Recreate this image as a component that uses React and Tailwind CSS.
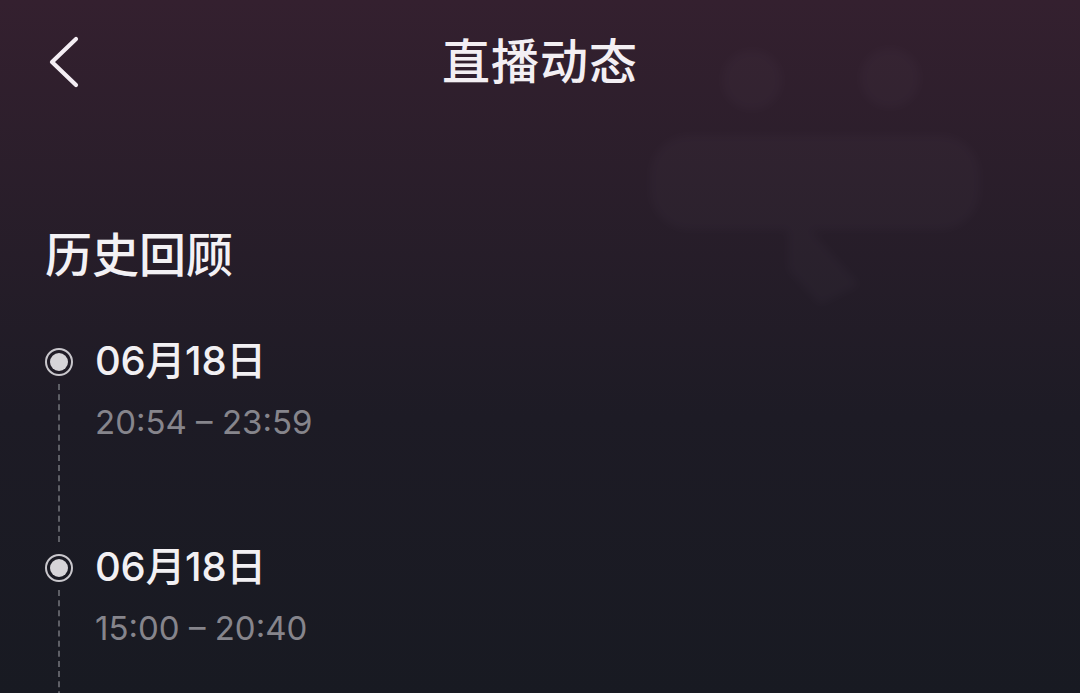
import React from "react";

const sessions = [
  { date: "06月18日", time: "20:54 – 23:59" },
  { date: "06月18日", time: "15:00 – 20:40" },
];

const font = { fontFamily: 'Inter, "Noto Sans CJK SC", sans-serif' };

const Watermark = () => (
  <svg
    className="absolute left-[520px] top-[20px] opacity-[0.022] blur-[4px]"
    width="480"
    height="360"
    viewBox="0 0 480 360"
    fill="#c9b8d8"
  >
    <circle cx="232" cy="60" r="30" />
    <circle cx="370" cy="58" r="30" />
    <rect x="130" y="115" width="330" height="95" rx="40" />
    <path d="M268 185 L340 265 L300 285 L268 250 Z" />
  </svg>
);

const BackIcon = () => (
  <svg
    className="absolute left-[46px] top-[36px]"
    width="36"
    height="52"
    viewBox="0 0 36 52"
    fill="none"
    stroke="#f4eef4"
    strokeWidth="4.2"
    strokeLinecap="round"
    strokeLinejoin="round"
  >
    <polyline points="30,3 6,26 30,49" />
  </svg>
);

const TimelineItem = ({ date, time }) => (
  <div className="flex h-[206px]">
    <div className="flex w-[28px] flex-col items-center pt-[12px]">
      <div className="flex h-[28px] w-[28px] items-center justify-center rounded-full border-2 border-[#c9c7cc]">
        <div className="h-[18px] w-[18px] rounded-full bg-[#d6d4d8]" />
      </div>
      <div className="mt-[8px] flex-1 border-l-2 border-dashed border-[#5e5f66]" />
    </div>
    <div className="ml-[22px] flex flex-col">
      <div className="text-[40px] font-medium leading-[50px] tracking-[-0.3px] text-[#f2f0f3]">
        {date}
      </div>
      <div className="mt-[16px] text-[33px] leading-[40px] text-[#86858c]">
        {time}
      </div>
    </div>
  </div>
);

export default function App() {
  return (
    <div
      className="relative h-[693px] w-[1080px] overflow-hidden bg-gradient-to-b from-[#34202f] via-[#1d1b25] via-60% to-[#181a22]"
      style={font}
    >
      <Watermark />
      <div className="relative flex h-[124px] items-center justify-center">
        <BackIcon />
        <h1 className="text-[48px] font-medium tracking-[1px] text-[#f3eff3]">
          直播动态
        </h1>
      </div>
      <div className="relative px-[45px] pt-[100px]">
        <h2 className="text-[47px] font-medium leading-[62px] text-[#f3f1f4]">
          历史回顾
        </h2>
        <div className="mt-[50px] flex flex-col">
          {sessions.map((s, i) => (
            <TimelineItem key={i} {...s} />
          ))}
        </div>
      </div>
    </div>
  );
}
